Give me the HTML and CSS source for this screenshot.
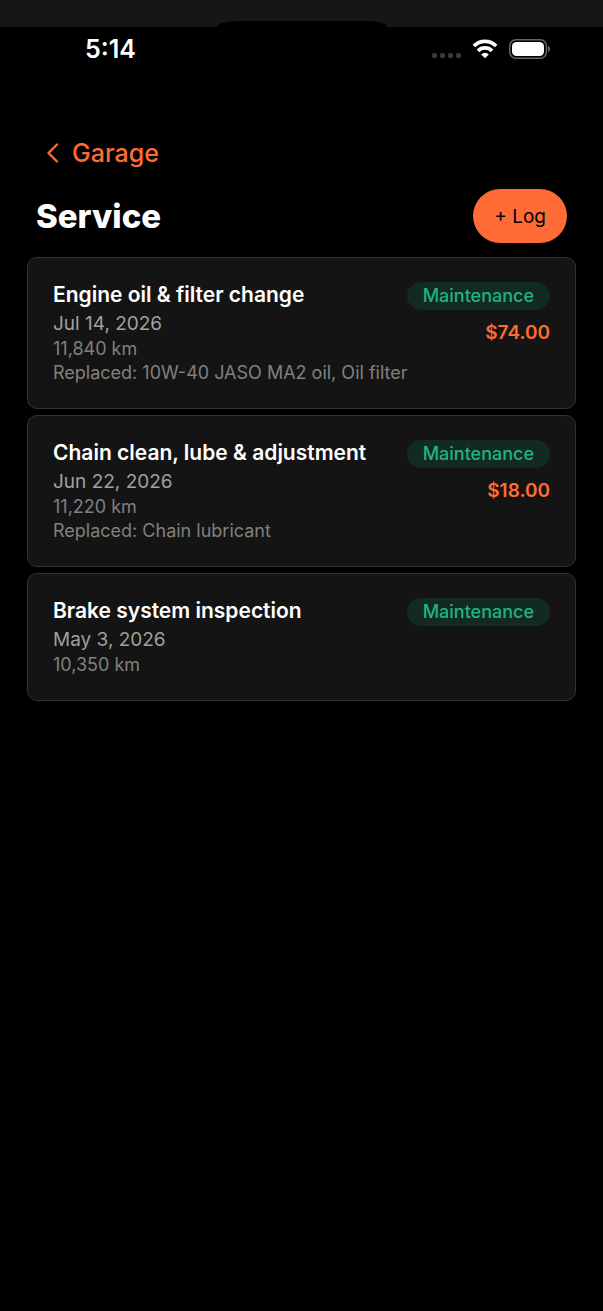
FILE: index.html
```
<!DOCTYPE html>
<html lang="en">

<head>
    <meta charset="UTF-8">
    <meta name="viewport" content="width=device-width, initial-scale=1.0">
    <title>Service</title>
    <link rel="stylesheet" href="styles.css">
</head>

<body>
    <div class="bezel">
        <div class="island"></div>
    </div>
    <div class="status">
        <span class="time">5:14</span>
        <div class="status-icons">
            <svg class="signal" width="30" height="20" viewBox="0 0 30 20" fill="#3a3a3a">
                <rect x="0" y="14" width="5" height="5" rx="1.5" />
                <rect x="8" y="14" width="5" height="5" rx="1.5" />
                <rect x="16" y="14" width="5" height="5" rx="1.5" />
                <rect x="24" y="14" width="5" height="5" rx="1.5" />
            </svg>
            <svg class="wifi" width="26" height="20" viewBox="0 0 26 20" fill="none" stroke="#fff" stroke-width="3.8">
                <path d="M1.9 7a15.7 15.7 0 0 1 22.2 0" />
                <path d="M6 11.8a10 10 0 0 1 14 0" />
                <path d="M13 19.2l-3.8-3.8a5.4 5.4 0 0 1 7.6 0z" fill="#fff" stroke="none" />
            </svg>
            <svg class="battery" width="42" height="20" viewBox="0 0 42 20">
                <rect x="0.8" y="0.8" width="36.6" height="18.4" rx="6" fill="none" stroke="#666" stroke-width="1.5" />
                <rect x="3" y="3" width="32" height="14" rx="4.5" fill="#fff" />
                <path d="M39 7v6c1.3-.5 2-1.7 2-3s-.7-2.5-2-3z" fill="#666" />
            </svg>
        </div>
    </div>

    <main class="screen">
        <a class="back" href="#">
            <svg width="14" height="20" viewBox="0 0 14 20" fill="none" stroke="#ff6b35" stroke-width="2.4"
                stroke-linecap="round" stroke-linejoin="round">
                <path d="M11 1.5L2.5 10l8.5 8.5" />
            </svg>
            Garage
        </a>
        <div class="header">
            <h1>Service</h1>
            <button class="log-btn" type="button">+ Log</button>
        </div>
        <ul class="logs">
            <li class="card">
                <div class="info">
                    <h2>Engine oil &amp; filter change</h2>
                    <p class="date">Jul 14, 2026</p>
                    <p class="meta">11,840 km</p>
                    <p class="meta">Replaced: 10W-40 JASO MA2 oil, Oil filter</p>
                </div>
                <div class="side">
                    <span class="badge">Maintenance</span>
                    <span class="cost">$74.00</span>
                </div>
            </li>
            <li class="card">
                <div class="info">
                    <h2>Chain clean, lube &amp; adjustment</h2>
                    <p class="date">Jun 22, 2026</p>
                    <p class="meta">11,220 km</p>
                    <p class="meta">Replaced: Chain lubricant</p>
                </div>
                <div class="side">
                    <span class="badge">Maintenance</span>
                    <span class="cost">$18.00</span>
                </div>
            </li>
            <li class="card">
                <div class="info">
                    <h2>Brake system inspection</h2>
                    <p class="date">May 3, 2026</p>
                    <p class="meta">10,350 km</p>
                </div>
                <div class="side">
                    <span class="badge">Maintenance</span>
                </div>
            </li>
        </ul>
    </main>
</body>

</html>
```
FILE: styles.css
```
* {
    margin: 0;
    padding: 0;
    box-sizing: border-box;
}

body {
    min-height: 100vh;
    background: #000;
    color: #fff;
    font-family: Inter, "Liberation Sans", sans-serif;
}

.bezel {
    display: flex;
    justify-content: center;
    align-items: flex-end;
    height: 27px;
    background: #171517;
}

.island {
    width: 170px;
    height: 6px;
    border-radius: 20px 20px 0 0 / 6px 6px 0 0;
    background: #000;
}

.status {
    display: flex;
    justify-content: space-between;
    align-items: center;
    height: 44px;
    padding: 0 52px 0 85px;
}

.time {
    font-size: 25px;
    font-weight: 600;
}

.status-icons {
    display: flex;
    align-items: center;
}

.wifi {
    margin: 0 11px 0 10px;
}

.screen {
    padding: 66px 27px 27px;
}

.back {
    display: inline-flex;
    align-items: center;
    gap: 12px;
    height: 32px;
    margin-left: 19px;
    color: #ff6b35;
    font-size: 25px;
    font-weight: 500;
    text-decoration: none;
}

.header {
    display: flex;
    justify-content: space-between;
    align-items: center;
    margin-top: 20px;
    padding: 0 9px;
}

h1 {
    font-size: 33px;
    font-weight: 800;
}

.log-btn {
    height: 54px;
    padding: 0 21px;
    border: none;
    border-radius: 27px;
    background: #ff6b35;
    color: #000;
    font-family: inherit;
    font-size: 19px;
    cursor: pointer;
}

.logs {
    display: grid;
    grid-template-columns: minmax(0, 1fr);
    gap: 6px;
    margin-top: 14px;
    list-style: none;
}

.card {
    display: flex;
    justify-content: space-between;
    padding: 24px 25px 23px;
    border: 1px solid #333;
    border-radius: 10px;
    background: #141414;
}

.info {
    min-width: 0;
}

h2 {
    margin-bottom: 3px;
    font-size: 21px;
    font-weight: 600;
    line-height: 26px;
}

.date {
    color: #a0a0a0;
    font-size: 19px;
    line-height: 26px;
}

/* long part lists run on below the badge */
.meta {
    color: #808080;
    font-size: 18px;
    line-height: 24px;
    white-space: nowrap;
}

.side {
    display: flex;
    flex-direction: column;
    flex-shrink: 0;
    align-items: flex-end;
    gap: 10px;
}

.badge {
    padding: 0 16px;
    border-radius: 14px;
    background: #122a22;
    color: #1fb47f;
    font-size: 18px;
    font-weight: 500;
    line-height: 28px;
}

.cost {
    color: #ff6b35;
    font-size: 19px;
    font-weight: 600;
    line-height: 26px;
}
```
